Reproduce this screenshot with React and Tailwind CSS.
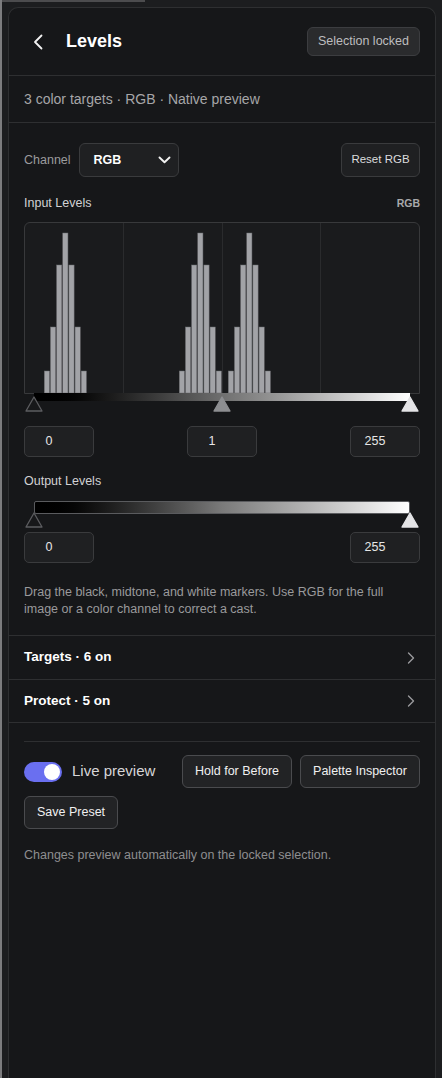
import React, { useState } from 'react';

// histogram peaks: x offset inside the box, bar heights from the baseline
const PEAKS = [19.3, 154.3, 203.3];
const BAR_HEIGHTS = [22, 66, 128, 160, 128, 66, 22];

const Histogram = () => (
  <svg width="393" height="170" className="block">
    {[98.5, 197.5, 295.5].map((x) => (
      <line key={x} x1={x} y1="0" x2={x} y2="170" stroke="#2a2b2d" strokeWidth="1" />
    ))}
    {PEAKS.map((start) =>
      BAR_HEIGHTS.map((h, i) => (
        <rect
          key={`${start}-${i}`}
          x={start + i * 6.15}
          y={170 - h}
          width="5.2"
          height={h}
          fill="#a2a3a7"
          stroke="#6a6b6f"
          strokeWidth="0.5"
        />
      ))
    )}
  </svg>
);

const Marker = ({ left, tone }) => {
  const fill = tone === 'black' ? '#17181a' : tone === 'mid' ? '#8d8e91' : '#e4e4e6';
  const stroke = tone === 'black' ? '#5c5d60' : fill;
  return (
    <svg
      width="18"
      height="16"
      viewBox="0 0 18 16"
      className="absolute -translate-x-1/2"
      style={{ left }}
    >
      <polygon points="9,1 17,15 1,15" fill={fill} stroke={stroke} strokeWidth="1.3" strokeLinejoin="round" />
    </svg>
  );
};

const NumBox = ({ value }) => (
  <div className="w-[70px] h-[31px] rounded-[5px] border border-[#3a3b3d] bg-[#1f2022] flex items-center justify-center pr-[20px] text-[12.5px] text-[#e6e6e6]">
    {value}
  </div>
);

const Chevron = () => (
  <svg width="8" height="12" viewBox="0 0 8 12" className="mr-[5px]">
    <path d="M1.5 1 L6.5 6 L1.5 11" fill="none" stroke="#9a9a9c" strokeWidth="1.4" strokeLinecap="round" strokeLinejoin="round" />
  </svg>
);

const Btn = ({ children, className = '' }) => (
  <button className={`h-[33px] px-[12px] rounded-[6px] border border-[#4a4b4e] bg-[#222325] text-[12.5px] text-[#f0f0f0] ${className}`}>
    {children}
  </button>
);

export default function App() {
  const [live, setLive] = useState(true);

  return (
    <div className="relative min-h-screen bg-[#1c1d1f] pt-[7px] pl-[8px] font-['Liberation_Sans',Arial,sans-serif] overflow-hidden">
      {/* window chrome slivers */}
      <div className="absolute top-0 left-0 w-[145px] h-[2px] bg-[#4c4c4e]"></div>
      <div className="absolute top-0 bottom-0 left-0 w-[2px] bg-[#7c7c7e]"></div>

      <div className="w-[428px] min-h-[1071px] rounded-t-[10px] border border-b-0 border-[#2e2f31] bg-[#161719]">
        {/* Header */}
        <div className="h-[68px] flex items-center justify-between pl-[23px] pr-[15px] border-b border-[#2e2f31]">
          <div className="flex items-center">
            <svg width="12" height="16" viewBox="0 0 12 16">
              <path d="M9.5 1.5 L3 8 L9.5 14.5" fill="none" stroke="#f2f2f2" strokeWidth="1.8" strokeLinecap="round" strokeLinejoin="round" />
            </svg>
            <h1 className="ml-[22px] text-[18px] font-bold text-white">Levels</h1>
          </div>
          <div className="h-[29px] px-[10px] flex items-center rounded-[6px] border border-[#3c3d40] bg-[#2a2b2d] text-[12.5px] text-[#bdbdbf]">
            Selection locked
          </div>
        </div>

        {/* Summary */}
        <div className="h-[47px] flex items-center px-[15px] border-b border-[#2e2f31] text-[14px] text-[#a6a6a8]">
          3 color targets · RGB · Native preview
        </div>

        {/* Levels editor */}
        <div className="px-[15px] pt-[20px] pb-[17px] border-b border-[#2e2f31]">
          <div className="flex items-center justify-between h-[34px]">
            <div className="flex items-center">
              <span className="text-[12.5px] text-[#9b9b9d]">Channel</span>
              <div className="ml-[8px] w-[100px] h-[34px] rounded-[6px] border border-[#3a3b3d] bg-[#1f2022] flex items-center justify-between pl-[14px] pr-[7px]">
                <span className="text-[12.5px] font-bold text-white">RGB</span>
                <svg width="13" height="8" viewBox="0 0 13 8">
                  <path d="M1.5 1.5 L6.5 6.2 L11.5 1.5" fill="none" stroke="#f2f2f2" strokeWidth="1.9" strokeLinecap="round" strokeLinejoin="round" />
                </svg>
              </div>
            </div>
            <button className="h-[34px] w-[79px] rounded-[6px] border border-[#3a3b3d] bg-[#1f2022] text-[11.5px] text-[#dcdcde]">
              Reset RGB
            </button>
          </div>

          <div className="mt-[18px] flex items-center justify-between leading-[16px]">
            <span className="text-[12.5px] text-[#d2d2d4]">Input Levels</span>
            <span className="text-[10.5px] font-bold text-[#a9a9ab]">RGB</span>
          </div>

          <div className="mt-[11px] h-[172px] rounded-t-[6px] border border-[#38393b] bg-[#1a1b1d] overflow-hidden">
            <Histogram />
          </div>

          <div className="relative mx-[10px] h-[18px] -mt-px">
            <div className="h-[8px] bg-gradient-to-r from-black via-[#6f6f6f] to-white"></div>
            <div className="absolute inset-x-0 top-[3px]">
              <Marker left="0%" tone="black" />
              <Marker left="50%" tone="mid" />
              <Marker left="100%" tone="white" />
            </div>
          </div>

          <div className="mt-[15px] flex items-center justify-between">
            <NumBox value="0" />
            <NumBox value="1" />
            <NumBox value="255" />
          </div>

          <div className="mt-[16px] leading-[16px] text-[12.5px] text-[#d2d2d4]">Output Levels</div>

          <div className="relative mx-[10px] mt-[12px] h-[25px]">
            <div className="h-[13px] rounded-[2px] border border-[#5a5b5e] bg-gradient-to-r from-black via-[#7a7a7a] to-white"></div>
            <div className="absolute inset-x-0 top-[11px]">
              <Marker left="0%" tone="black" />
              <Marker left="100%" tone="white" />
            </div>
          </div>

          <div className="mt-[6px] flex items-center justify-between">
            <NumBox value="0" />
            <NumBox value="255" />
          </div>

          <p className="mt-[21px] text-[12.5px] leading-[17px] text-[#9a9a9c]">
            Drag the black, midtone, and white markers. Use RGB for the full image or a color channel to correct a cast.
          </p>
        </div>

        {/* Collapsible rows */}
        <div className="h-[44px] flex items-center justify-between px-[15px] border-b border-[#2e2f31]">
          <span className="text-[13.5px] font-bold text-white">Targets · 6 on</span>
          <Chevron />
        </div>
        <div className="h-[43px] flex items-center justify-between px-[15px] border-b border-[#2e2f31]">
          <span className="text-[13.5px] font-bold text-white">Protect · 5 on</span>
          <Chevron />
        </div>

        {/* Footer actions */}
        <div className="px-[15px] pt-[18px]">
          <div className="h-px bg-[#2e2f31]"></div>
          <div className="mt-[13px] flex flex-wrap items-center gap-2">
            <label className="w-[150px] flex items-center gap-[10px] cursor-pointer" onClick={() => setLive(!live)}>
              <span className={`w-[38px] h-[20px] rounded-full flex items-center px-[2px] ${live ? 'bg-[#6a6ff0] justify-end' : 'bg-[#3a3b3d] justify-start'}`}>
                <span className="w-[16px] h-[16px] rounded-full bg-white"></span>
              </span>
              <span className="text-[15px] text-[#d6d6d8]">Live preview</span>
            </label>
            <Btn>Hold for Before</Btn>
            <Btn>Palette Inspector</Btn>
            <Btn>Save Preset</Btn>
          </div>
          <p className="mt-[18px] text-[12.5px] leading-[17px] text-[#8e8e90]">
            Changes preview automatically on the locked selection.
          </p>
        </div>
      </div>
    </div>
  );
}
